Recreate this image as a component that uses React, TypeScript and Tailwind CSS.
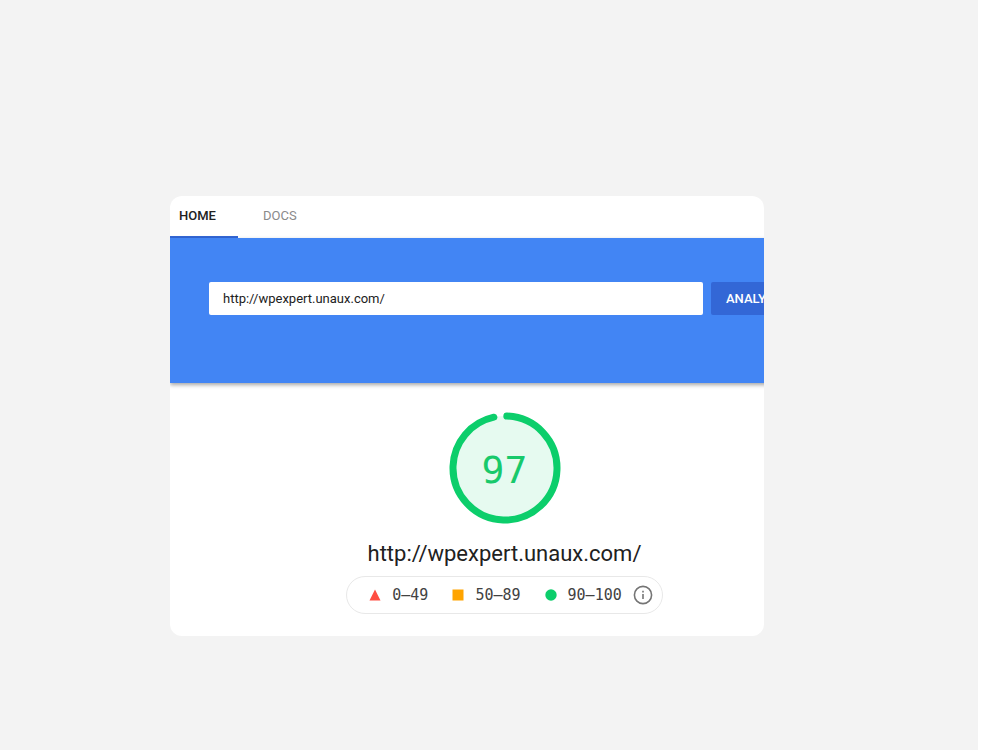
interface ScoreRange {
  label: string;
  shape: 'triangle' | 'square' | 'circle';
}

const ranges: ScoreRange[] = [
  { label: '0–49', shape: 'triangle' },
  { label: '50–89', shape: 'square' },
  { label: '90–100', shape: 'circle' },
];

function RangeMarker({ shape }: { shape: ScoreRange['shape'] }) {
  return (
    <svg className="h-3 w-3" viewBox="0 0 12 12" aria-hidden="true">
      {shape === 'triangle' && <path d="M6 0.5 11.5 11.5H0.5z" fill="#ff4e42" />}
      {shape === 'square' && <rect x="0.5" y="0.5" width="11" height="11" fill="#ffa400" />}
      {shape === 'circle' && <circle cx="6" cy="6" r="5.7" fill="#0cce6b" />}
    </svg>
  );
}

function Gauge({ score }: { score: number }) {
  return (
    <div className="grid h-28 w-28 place-items-center">
      <svg className="col-start-1 row-start-1 h-28 w-28" viewBox="0 0 112 112" aria-hidden="true">
        <circle cx="56" cy="56" r="52" fill="#e6faf0" />
        {/* one unit shorter than the score, to make room for the round caps */}
        <circle
          cx="56"
          cy="56"
          r="52"
          fill="none"
          stroke="#0cce6b"
          strokeWidth="7"
          strokeLinecap="round"
          pathLength="100"
          strokeDasharray={`${score - 1} 100`}
          transform="rotate(-88 56 56)"
        />
      </svg>
      <span className="col-start-1 row-start-1 pt-1 font-['DejaVu_Sans_Mono',monospace] text-[38px] leading-10 text-[#18c96b]">
        {score}
      </span>
    </div>
  );
}

export default function App() {
  return (
    <div className="min-h-screen bg-white pr-[22px] font-['Roboto',sans-serif]">
      <main className="min-h-screen bg-[#f3f3f3] pt-[196px] pr-[214px] pl-[170px]">
        <section className="overflow-hidden rounded-xl bg-white">
          {/* The report is wider than its card and runs off the right edge */}
          <div className="-mr-[75px]">
            <nav className="flex h-[42px] text-[13px] leading-10">
              <a href="#home" className="w-[68px] border-b-2 border-[#3367d6] pl-[9px] font-medium text-[#212121]">
                HOME
              </a>
              <a href="#docs" className="pl-[25px] text-[#8a8a8a]">
                DOCS
              </a>
            </nav>

            <form
              className="relative flex gap-2 bg-[#4285f4] px-[39px] pt-11 pb-[68px] shadow-[0_2px_4px_rgba(0,0,0,0.35)]"
              onSubmit={(e) => e.preventDefault()}
            >
              <input
                type="text"
                aria-label="Web page URL"
                defaultValue="http://wpexpert.unaux.com/"
                className="h-[33px] min-w-0 flex-1 rounded-xs bg-white px-[14px] text-[13px] text-[#212121] outline-none"
              />
              <button
                type="submit"
                className="h-[33px] w-[89px] rounded-xs bg-[#3367d6] pl-[15px] text-left text-[13px] font-medium text-white"
              >
                ANALYZE
              </button>
            </form>

            <div className="flex flex-col items-center pt-[29px] pb-[22px]">
              <Gauge score={97} />
              <h1 className="mt-4 text-[22px] leading-7 text-[#212121]">http://wpexpert.unaux.com/</h1>
              <div className="mt-2 flex h-[38px] items-center rounded-full border border-[#e8e8e8] pr-[9px] pl-[22px]">
                <ul className="flex gap-6 font-['DejaVu_Sans_Mono',monospace] text-[15px] text-[#424242]">
                  {ranges.map((range) => (
                    <li key={range.label} className="flex items-center gap-[11px]">
                      <RangeMarker shape={range.shape} />
                      <span>{range.label}</span>
                    </li>
                  ))}
                </ul>
                <button type="button" aria-label="About the scale" className="ml-[11px]">
                  <svg className="h-5 w-5" viewBox="0 0 20 20" fill="none" aria-hidden="true">
                    <circle cx="10" cy="10" r="8.6" stroke="#757575" strokeWidth="1.6" />
                    <path d="M10 9v5M10 5.7v1.7" stroke="#757575" strokeWidth="1.6" />
                  </svg>
                </button>
              </div>
            </div>
          </div>
        </section>
      </main>
    </div>
  );
}
